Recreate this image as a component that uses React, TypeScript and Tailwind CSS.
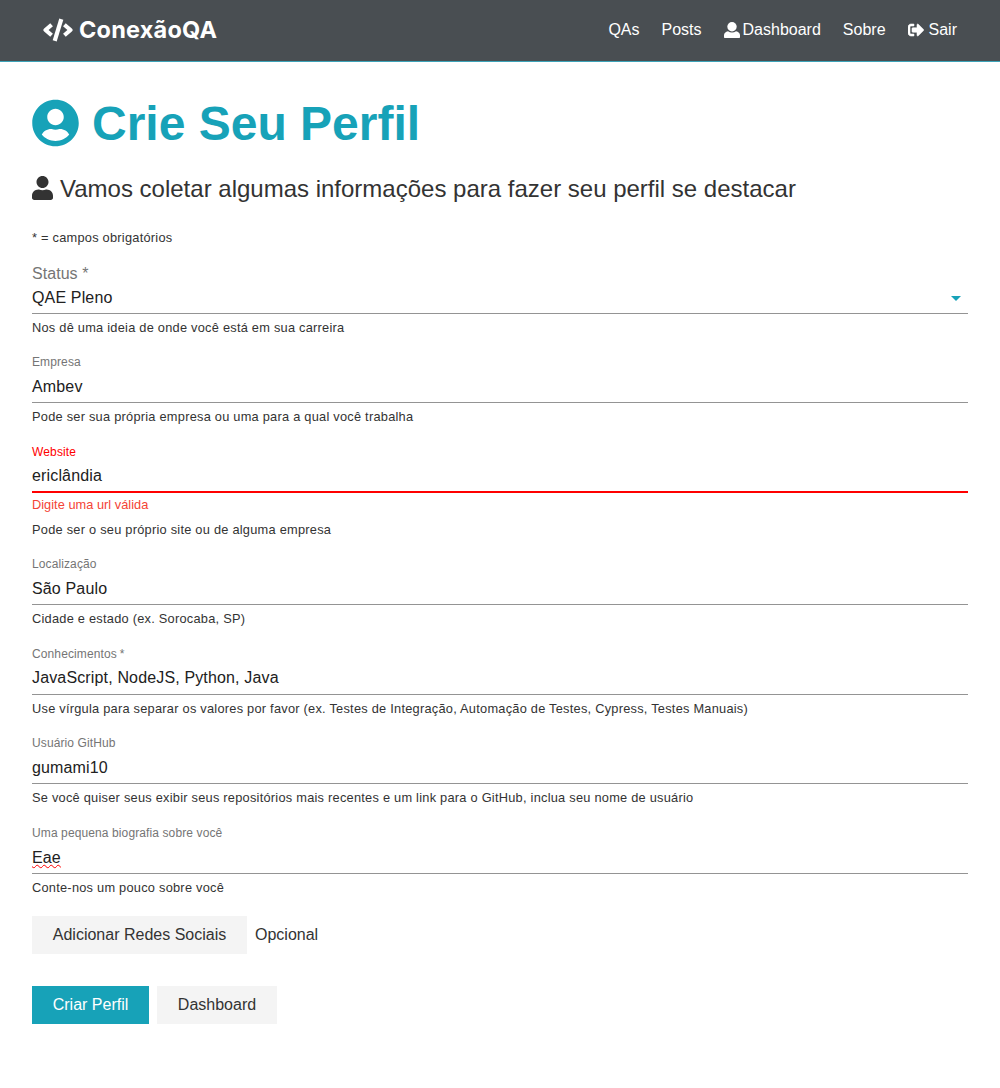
import type { ReactNode } from 'react';
import { FaUser, FaSignOutAlt, FaUserCircle } from 'react-icons/fa';

function CodeIcon() {
  return (
    <svg width="30" height="24" viewBox="0 0 30 24" fill="none" stroke="currentColor" strokeWidth="4.1" strokeLinejoin="round">
      <path d="M8.600 6.700 2.500 12l6.100 5.300M21.400 6.700l6.100 5.300-6.100 5.300" />
      <path d="m18.300 1.200-6.600 21.600" strokeWidth="4.200" />
    </svg>
  );
}

function PersonIcon() {
  return (
    <svg width="16" height="16" viewBox="0 0 16 16" fill="currentColor">
      <circle cx="8" cy="4.700" r="4.700" />
      <path d="M4 9.200c2.300 1.700 5.700 1.700 8 0 2.400.3 4 2 4 4.100v2a.7.7 0 0 1-.7.7H.7a.7.7 0 0 1-.7-.7v-2c0-2.100 1.600-3.800 4-4.100z" />
    </svg>
  );
}

function Field({ label, value, hint, error, spell, required }: { label: string; value: string; hint: string; error?: string; spell?: boolean; required?: boolean }) {
  return (
    <div className={error ? 'h-[112.4px]' : 'h-[89.7px]'}>
      <div className={`text-[12px] leading-[14px] whitespace-nowrap ${error ? 'tracking-[0.15px] text-[#ff0000]' : 'tracking-[0.11px] text-[#757575]'}`}>
        {label}{required && <span className="ml-[3px]">*</span>}
      </div>
      <div className={`mt-[7px] h-[27px] pt-[0.5px] text-[16px] leading-[20px] tracking-[0.15px] text-[#212121] ${error ? 'border-b-2 border-[#ff0000]' : 'border-b border-[#949494]'}`}>
        <span className={spell ? 'underline decoration-wavy decoration-[#ff0000] decoration-1 underline-offset-1' : ''}>{value}</span>
      </div>
      {error && <div className="mt-[4px] text-[12.8px] leading-[16px] tracking-[0.02px] text-[#f44336]">{error}</div>}
      <div className={`text-[12.8px] leading-[16px] tracking-[0.245px] text-[#333] ${error ? 'mt-[9px]' : 'mt-[6px]'}`}>{hint}</div>
    </div>
  );
}

function NavItem({ children }: { children: ReactNode }) {
  return <a className="flex items-center gap-[3px]">{children}</a>;
}

export default function App() {
  return (
    <div className="h-[1088px] overflow-hidden bg-white font-['Liberation_Sans',Arial,sans-serif] text-[#333]">
      <nav className="flex h-[62px] items-center justify-between border-b border-[#3da3b8] bg-[#494e52] px-[43px] pb-[2px] text-white">
        <div className="flex items-center gap-[6px] font-['Inter',sans-serif] text-[23.5px] font-bold tracking-[0.2px]">
          <CodeIcon /><span>ConexãoQA</span>
        </div>
        <div className="flex gap-[22px] text-[16px]">
          <NavItem>QAs</NavItem><NavItem>Posts</NavItem>
          <NavItem><PersonIcon />Dashboard</NavItem>
          <NavItem>Sobre</NavItem>
          <NavItem><FaSignOutAlt size={16} stroke="currentColor" strokeWidth={18} className="mr-[2px]" />Sair</NavItem>
        </div>
      </nav>
      <main className="px-8 pt-[36px]">
        <h1 className="flex h-[52px] items-center gap-[13px] text-[48px] font-bold text-[#17a2b8]"><FaUserCircle size={48} className="mb-[3px] w-[47px]" />Crie Seu Perfil</h1>
        <p className="mt-[25px] flex h-[28px] items-center gap-[7px] text-[24px]"><FaUser size={24} className="mb-[2px] w-[21px]" />Vamos coletar algumas informações para fazer seu perfil se destacar</p>
        <p className="mt-[26px] text-[12.8px] leading-[18px] tracking-[0.245px]">* = campos obrigatórios</p>
        <div className="mt-[18px] h-[90px]">
          <div className="text-[16px] leading-[18px] tracking-[0.05px] text-[#757575]">Status *</div>
          <div className="mt-[6px] flex h-[25px] justify-between border-b border-[#949494] text-[16px] leading-[18px] tracking-[0.15px] text-[#212121]">
            <span>QAE Pleno</span>
            <svg className="mt-[7px] mr-[7px]" width="10" height="5" viewBox="0 0 10 5"><path d="M0 0h10L5 5z" fill="#17a2b8" /></svg>
          </div>
          <div className="mt-[6px] text-[12.8px] leading-[16px] tracking-[0.245px]">Nos dê uma ideia de onde você está em sua carreira</div>
        </div>
        <Field label="Empresa" value="Ambev" hint="Pode ser sua própria empresa ou uma para a qual você trabalha" />
        <Field label="Website" value="ericlândia" error="Digite uma url válida" hint="Pode ser o seu próprio site ou de alguma empresa" />
        <Field label="Localização" value="São Paulo" hint="Cidade e estado (ex. Sorocaba, SP)" />
        <Field label="Conhecimentos" required value="JavaScript, NodeJS, Python, Java" hint="Use vírgula para separar os valores por favor (ex. Testes de Integração, Automação de Testes, Cypress, Testes Manuais)" />
        <Field label="Usuário GitHub" value="gumami10" hint="Se você quiser seus exibir seus repositórios mais recentes e um link para o GitHub, inclua seu nome de usuário" />
        <Field label="Uma pequena biografia sobre você" value="Eae" spell hint="Conte-nos um pouco sobre você" />
        <div className="flex items-center gap-[8px] text-[16px]">
          <button className="h-[38px] w-[215px] bg-[#f4f4f4]">Adicionar Redes Sociais</button><span>Opcional</span>
        </div>
        <div className="mt-[32px] flex gap-[8px] text-[16px]">
          <button className="h-[38px] w-[117px] bg-[#17a2b8] text-white">Criar Perfil</button>
          <button className="h-[38px] w-[120px] bg-[#f4f4f4]">Dashboard</button>
        </div>
      </main>
    </div>
  );
}
